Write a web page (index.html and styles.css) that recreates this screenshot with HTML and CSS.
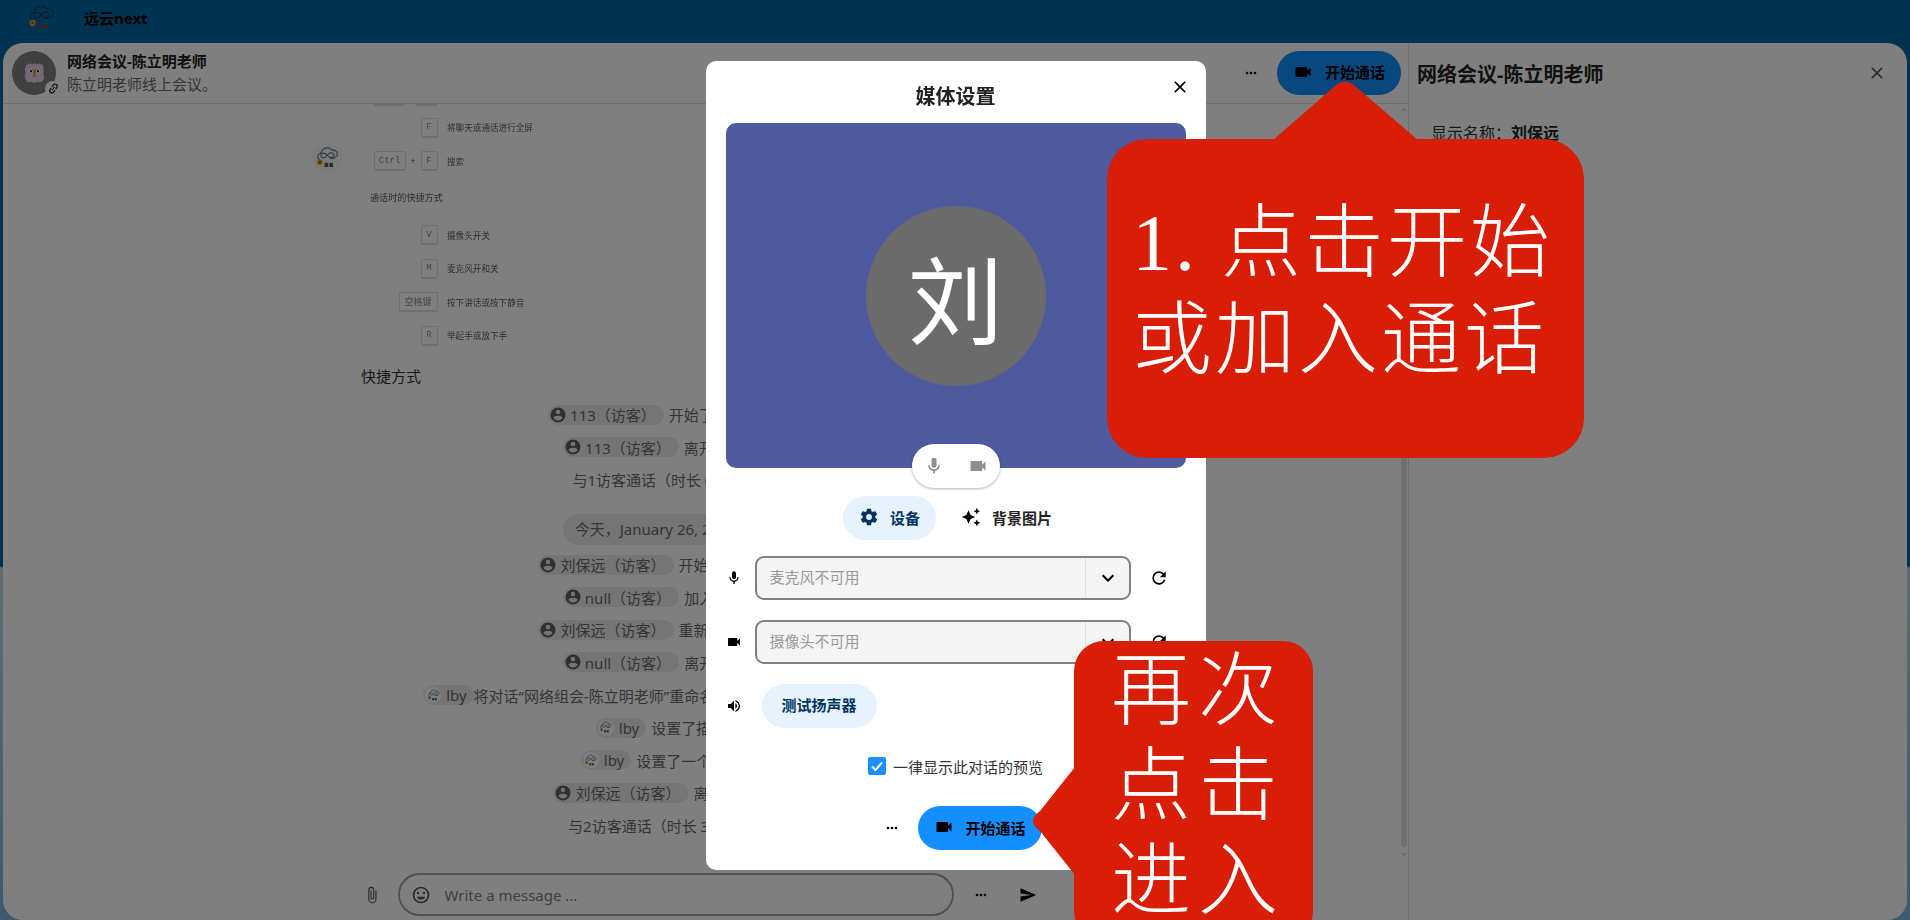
FILE: index.html
```html
<!DOCTYPE html>
<html lang="zh-CN">
<head>
    <meta charset="UTF-8">
    <meta name="viewport" content="width=device-width, initial-scale=1.0">
    <title>网络会议-陈立明老师 - 远云next</title>
    <link rel="stylesheet" href="styles.css">
</head>
<body>
    <!-- Icons -->
    <svg class="sprite" xmlns="http://www.w3.org/2000/svg">
        <symbol id="i-video" viewBox="0 0 24 24"><path d="M17,10.5V7A1,1 0 0,0 16,6H4A1,1 0 0,0 3,7V17A1,1 0 0,0 4,18H16A1,1 0 0,0 17,17V13.5L21,17.5V6.5L17,10.5Z"/></symbol>
        <symbol id="i-mic" viewBox="0 0 24 24"><path d="M12,2A3,3 0 0,1 15,5V11A3,3 0 0,1 12,14A3,3 0 0,1 9,11V5A3,3 0 0,1 12,2M19,11C19,14.53 16.39,17.44 13,17.93V21H11V17.93C7.61,17.44 5,14.53 5,11H7A5,5 0 0,0 12,16A5,5 0 0,0 17,11H19Z"/></symbol>
        <symbol id="i-cog" viewBox="0 0 24 24"><path d="M12,15.5A3.5,3.5 0 0,1 8.5,12A3.5,3.5 0 0,1 12,8.5A3.5,3.5 0 0,1 15.5,12A3.5,3.5 0 0,1 12,15.5M19.43,12.97C19.47,12.65 19.5,12.33 19.5,12C19.5,11.67 19.47,11.34 19.43,11L21.54,9.37C21.73,9.22 21.78,8.95 21.66,8.73L19.66,5.27C19.54,5.05 19.27,4.96 19.05,5.05L16.56,6.05C16.04,5.66 15.5,5.32 14.87,5.07L14.5,2.42C14.46,2.18 14.25,2 14,2H10C9.75,2 9.54,2.18 9.5,2.42L9.13,5.07C8.5,5.32 7.96,5.66 7.44,6.05L4.95,5.05C4.73,4.96 4.46,5.05 4.34,5.27L2.34,8.73C2.21,8.95 2.27,9.22 2.46,9.37L4.57,11C4.53,11.34 4.5,11.67 4.5,12C4.5,12.33 4.53,12.65 4.57,12.97L2.46,14.63C2.27,14.78 2.21,15.05 2.34,15.27L4.34,18.73C4.46,18.95 4.73,19.03 4.95,18.95L7.44,17.94C7.96,18.34 8.5,18.68 9.13,18.93L9.5,21.58C9.54,21.82 9.75,22 10,22H14C14.25,22 14.46,21.82 14.5,21.58L14.87,18.93C15.5,18.67 16.04,18.34 16.56,17.94L19.05,18.95C19.27,19.03 19.54,18.95 19.66,18.73L21.66,15.27C21.78,15.05 21.73,14.78 21.54,14.63L19.43,12.97Z"/></symbol>
        <symbol id="i-sparkle" viewBox="0 0 24 24"><path d="M19,1L17.74,3.75L15,5L17.74,6.26L19,9L20.25,6.26L23,5L20.25,3.75M9,4L6.5,9.5L1,12L6.5,14.5L9,20L11.5,14.5L17,12L11.5,9.5M19,15L17.74,17.74L15,19L17.74,20.25L19,23L20.25,20.25L23,19L20.25,17.74"/></symbol>
        <symbol id="i-refresh" viewBox="0 0 24 24"><path d="M17.65,6.35C16.2,4.9 14.21,4 12,4A8,8 0 0,0 4,12A8,8 0 0,0 12,20C15.73,20 18.84,17.45 19.73,14H17.65C16.83,16.33 14.61,18 12,18A6,6 0 0,1 6,12A6,6 0 0,1 12,6C13.66,6 15.14,6.69 16.22,7.78L13,11H20V4L17.65,6.35Z"/></symbol>
        <symbol id="i-chevron" viewBox="0 0 24 24"><path d="M7.41,8.58L12,13.17L16.59,8.58L18,10L12,16L6,10L7.41,8.58Z"/></symbol>
        <symbol id="i-volume" viewBox="0 0 24 24"><path d="M14,3.23V5.29C16.89,6.15 19,8.83 19,12C19,15.17 16.89,17.84 14,18.7V20.77C18,19.86 21,16.28 21,12C21,7.72 18,4.14 14,3.23M16.5,12C16.5,10.23 15.5,8.71 14,7.97V16C15.5,15.29 16.5,13.76 16.5,12M3,9V15H7L12,20V4L7,9H3Z"/></symbol>
        <symbol id="i-close" viewBox="0 0 24 24"><path d="M19,6.41L17.59,5L12,10.59L6.41,5L5,6.41L10.59,12L5,17.59L6.41,19L12,13.41L17.59,19L19,17.59L13.41,12L19,6.41Z"/></symbol>
        <symbol id="i-dots" viewBox="0 0 24 24"><path d="M16,12A2,2 0 0,1 18,10A2,2 0 0,1 20,12A2,2 0 0,1 18,14A2,2 0 0,1 16,12M10,12A2,2 0 0,1 12,10A2,2 0 0,1 14,12A2,2 0 0,1 12,14A2,2 0 0,1 10,12M4,12A2,2 0 0,1 6,10A2,2 0 0,1 8,12A2,2 0 0,1 6,14A2,2 0 0,1 4,12Z"/></symbol>
        <symbol id="i-send" viewBox="0 0 24 24"><path d="M2,21L23,12L2,3V10L17,12L2,14V21Z"/></symbol>
        <symbol id="i-clip" viewBox="0 0 24 24"><path d="M16.5,6V17.5A4,4 0 0,1 12.5,21.5A4,4 0 0,1 8.5,17.5V5A2.5,2.5 0 0,1 11,2.5A2.5,2.5 0 0,1 13.5,5V15.5A1,1 0 0,1 12.5,16.5A1,1 0 0,1 11.5,15.5V6H10V15.5A2.5,2.5 0 0,0 12.5,18A2.5,2.5 0 0,0 15,15.5V5A4,4 0 0,0 11,1A4,4 0 0,0 7,5V17.5A5.5,5.5 0 0,0 12.5,23A5.5,5.5 0 0,0 18,17.5V6H16.5Z"/></symbol>
        <symbol id="i-smile" viewBox="0 0 24 24"><path d="M12,2C6.47,2 2,6.47 2,12A10,10 0 0,0 12,22A10,10 0 0,0 22,12C22,6.47 17.5,2 12,2M12,20A8,8 0 0,1 4,12A8,8 0 0,1 12,4A8,8 0 0,1 20,12A8,8 0 0,1 12,20M15.5,11A1.5,1.5 0 0,0 17,9.5A1.5,1.5 0 0,0 15.5,8A1.5,1.5 0 0,0 14,9.5A1.5,1.5 0 0,0 15.5,11M8.5,11A1.5,1.5 0 0,0 10,9.5A1.5,1.5 0 0,0 8.5,8A1.5,1.5 0 0,0 7,9.5A1.5,1.5 0 0,0 8.5,11M12,17.5C14.33,17.5 16.31,16.04 17.11,14H6.89C7.69,16.04 9.67,17.5 12,17.5Z"/></symbol>
        <symbol id="i-user" viewBox="0 0 24 24"><path d="M12,19.2C9.5,19.2 7.29,17.92 6,16C6.03,14 10,12.9 12,12.9C14,12.9 17.97,14 18,16C16.71,17.92 14.5,19.2 12,19.2M12,5A3,3 0 0,1 15,8A3,3 0 0,1 12,11A3,3 0 0,1 9,8A3,3 0 0,1 12,5M12,2A10,10 0 0,0 2,12A10,10 0 0,0 12,22A10,10 0 0,0 22,12C22,6.47 17.5,2 12,2Z"/></symbol>
        <symbol id="i-link" viewBox="0 0 24 24"><path d="M3.9,12C3.9,10.29 5.29,8.9 7,8.9H11V7H7A5,5 0 0,0 2,12A5,5 0 0,0 7,17H11V15.1H7C5.29,15.1 3.9,13.71 3.9,12M8,13H16V11H8V13M17,7H13V8.9H17C18.71,8.9 20.1,10.29 20.1,12C20.1,13.71 18.71,15.1 17,15.1H13V17H17A5,5 0 0,0 22,12A5,5 0 0,0 17,7Z"/></symbol>
        <symbol id="i-logo" viewBox="0 0 40 40">
            <path d="M9 24C3 22 3 13 10 12C11 3 24 0 28 7C36 5 40 14 35 18C30 23 24 20 20 15C16 10 10 12 10 16C10 21 17 21 20 16C23 11 29 10 31 13C33 17 29 20 25 20" fill="none" stroke="#17384f" stroke-width="1.5"/>
            <circle cx="8" cy="27" r="4.5" fill="#d89c18"/>
            <circle cx="8" cy="27" r="1.6" fill="#6b5010"/>
            <rect x="16" y="28" width="6" height="7" fill="#555"/>
            <rect x="24" y="28" width="6" height="7" fill="#555"/>
        </symbol>
    </svg>

    <header class="topbar">
        <svg class="topbar-logo"><use href="#i-logo"/></svg>
        <span class="topbar-name">远云next</span>
    </header>

    <main class="app">
        <section class="chat">
            <div class="chat-header">
                <div class="room-avatar">
                    <svg class="owl" viewBox="0 0 24 24">
                        <path d="M4 2Q7 0 9 2Q12 0 15 2Q18 0 20 2Q23 4 22 7Q24 10 22 13Q24 17 22 20Q20 24 16 22Q12 24 8 22Q4 24 2 20Q0 16 2 12Q0 8 2 5Q2 3 4 2Z" fill="#e2d0e6"/>
                        <circle cx="8" cy="10" r="2.4" fill="#fff"/>
                        <circle cx="16" cy="10" r="2.4" fill="#fff"/>
                        <circle cx="8" cy="10" r="1.3" fill="#222"/>
                        <circle cx="16" cy="10" r="1.3" fill="#222"/>
                        <path d="M9.5 6.5L12 9L14.5 6.5L13 14L14.5 16H9.5L11 14Z" fill="#e88a3a"/>
                    </svg>
                    <span class="room-badge"><svg class="icon-link"><use href="#i-link"/></svg></span>
                </div>
                <div class="room-info">
                    <div class="room-title">网络会议-陈立明老师</div>
                    <div class="room-desc">陈立明老师线上会议。</div>
                </div>
                <div class="header-actions">
                    <button class="icon-btn"><svg class="icon-16"><use href="#i-dots"/></svg></button>
                    <button class="call-btn"><svg class="icon-20"><use href="#i-video"/></svg>开始通话</button>
                </div>
            </div>

            <div class="chat-body">
                <div class="msg-group">
                    <div class="msg-avatar"><svg class="msg-logo"><use href="#i-logo"/></svg></div>
                    <div class="msg-content">
                        <div class="key-stub"><span class="stub-wide"></span><span class="stub-small"></span></div>

                        <div class="shortcut first">
                            <div class="keys"><kbd>F</kbd></div>
                            <span>将聊天或通话进行全屏</span>
                        </div>
                        <div class="shortcut">
                            <div class="keys"><kbd class="wide">Ctrl</kbd><i>+</i><kbd>F</kbd></div>
                            <span>搜索</span>
                        </div>
                        <div class="shortcut-title">通话时的快捷方式</div>
                        <div class="shortcut">
                            <div class="keys"><kbd>V</kbd></div>
                            <span>摄像头开关</span>
                        </div>
                        <div class="shortcut">
                            <div class="keys"><kbd>M</kbd></div>
                            <span>麦克风开和关</span>
                        </div>
                        <div class="shortcut">
                            <div class="keys"><kbd class="space">空格键</kbd></div>
                            <span>按下讲话或按下静音</span>
                        </div>
                        <div class="shortcut">
                            <div class="keys"><kbd>R</kbd></div>
                            <span>举起手或放下手</span>
                        </div>
                        <div class="image-caption">快捷方式</div>

                        <div class="sys-msg"><span class="pill"><svg class="pill-icon"><use href="#i-user"/></svg>113（访客）</span>开始了一个通话</div>
                        <div class="sys-msg"><span class="pill"><svg class="pill-icon"><use href="#i-user"/></svg>113（访客）</span>离开了通话</div>
                        <div class="sys-msg">与1访客通话（时长 0:12）</div>
                        <div class="date-row"><span class="date-pill">今天，January 26, 2025</span></div>
                        <div class="sys-msg"><span class="pill"><svg class="pill-icon"><use href="#i-user"/></svg>刘保远（访客）</span>开始了一个通话</div>
                        <div class="sys-msg"><span class="pill"><svg class="pill-icon"><use href="#i-user"/></svg>null（访客）</span>加入了通话</div>
                        <div class="sys-msg"><span class="pill"><svg class="pill-icon"><use href="#i-user"/></svg>刘保远（访客）</span>重新加入了通话</div>
                        <div class="sys-msg"><span class="pill"><svg class="pill-icon"><use href="#i-user"/></svg>null（访客）</span>离开了通话</div>
                        <div class="sys-msg"><span class="pill pill-user tight"><span class="pill-avatar"><svg><use href="#i-logo"/></svg></span>lby</span>将对话“网络组会-陈立明老师”重命名为了“网络会议-陈立明老师”.</div>
                        <div class="sys-msg"><span class="pill pill-user"><span class="pill-avatar"><svg><use href="#i-logo"/></svg></span>lby</span>设置了描述</div>
                        <div class="sys-msg"><span class="pill pill-user"><span class="pill-avatar"><svg><use href="#i-logo"/></svg></span>lby</span>设置了一个密码</div>
                        <div class="sys-msg"><span class="pill"><svg class="pill-icon"><use href="#i-user"/></svg>刘保远（访客）</span>离开了通话</div>
                        <div class="sys-msg">与2访客通话（时长 32:15）</div>
                    </div>
                </div>

                <div class="scrollbar">
                    <span class="arrow-up"></span>
                    <span class="thumb"></span>
                    <span class="arrow-down"></span>
                </div>
            </div>

            <div class="composer">
                <button class="icon-btn"><svg class="icon-18 dim"><use href="#i-clip"/></svg></button>
                <div class="composer-input">
                    <svg class="icon-20 dim"><use href="#i-smile"/></svg>
                    <span>Write a message ...</span>
                </div>
                <button class="icon-btn"><svg class="icon-16"><use href="#i-dots"/></svg></button>
                <button class="icon-btn"><svg class="icon-18 send"><use href="#i-send"/></svg></button>
            </div>
        </section>

        <aside class="sidebar">
            <div class="sidebar-head">
                <h2>网络会议-陈立明老师</h2>
                <svg class="icon-20 dim"><use href="#i-close"/></svg>
            </div>
            <div class="sidebar-name">显示名称：<b>刘保远</b></div>
        </aside>
    </main>

    <!-- Media settings dialog -->
    <div class="overlay">
        <div class="modal">
            <div class="modal-head">
                <h2>媒体设置</h2>
                <svg class="modal-close"><use href="#i-close"/></svg>
            </div>

            <div class="preview">
                <div class="preview-avatar">刘</div>
                <div class="preview-controls">
                    <svg class="icon-20"><use href="#i-mic"/></svg>
                    <svg class="icon-20"><use href="#i-video"/></svg>
                </div>
            </div>

            <div class="tabs">
                <button class="tab active"><svg class="icon-20"><use href="#i-cog"/></svg>设备</button>
                <button class="tab"><svg class="icon-20"><use href="#i-sparkle"/></svg>背景图片</button>
            </div>

            <div class="device-row">
                <svg class="icon-16"><use href="#i-mic"/></svg>
                <div class="select">
                    <span class="select-value">麦克风不可用</span>
                    <span class="select-arrow"><svg class="icon-24"><use href="#i-chevron"/></svg></span>
                </div>
                <svg class="icon-20 refresh"><use href="#i-refresh"/></svg>
            </div>
            <div class="device-row">
                <svg class="icon-16"><use href="#i-video"/></svg>
                <div class="select">
                    <span class="select-value">摄像头不可用</span>
                    <span class="select-arrow"><svg class="icon-24"><use href="#i-chevron"/></svg></span>
                </div>
                <svg class="icon-20 refresh"><use href="#i-refresh"/></svg>
            </div>
            <div class="device-row">
                <svg class="icon-16"><use href="#i-volume"/></svg>
                <button class="test-btn">测试扬声器</button>
            </div>

            <div class="preview-check">
                <span class="checkbox">
                    <svg viewBox="0 0 18 18"><path d="M4 9.5L7.5 13L14 5.5" fill="none" stroke="#fff" stroke-width="2"/></svg>
                </span>
                一律显示此对话的预览
            </div>

            <div class="modal-actions">
                <button class="icon-btn"><svg class="icon-16"><use href="#i-dots"/></svg></button>
                <button class="call-btn"><svg class="icon-20"><use href="#i-video"/></svg>开始通话</button>
            </div>
        </div>
    </div>

    <!-- Callouts drawn over the screenshot -->
    <div class="callout callout-one">
        <svg class="tail-up" viewBox="0 0 145 62"><path d="M0 62L62 8Q72 -1 82 8L145 62Z"/></svg>
        <div class="callout-line">1. 点击开始</div>
        <div class="callout-line">或加入通话</div>
    </div>
    <div class="callout callout-two">
        <svg class="tail-left" viewBox="0 0 48 108"><path d="M48 0L13 44Q-1 54 13 64L48 108Z"/></svg>
        <div class="callout-line">再次</div>
        <div class="callout-line">点击</div>
        <div class="callout-line">进入</div>
    </div>
</body>
</html>
```

FILE: styles.css
```css
* {
    box-sizing: border-box;
}

html, body {
    height: 100%;
}

body {
    margin: 0;
    height: 920px;
    overflow: hidden;
    font-family: "Noto Sans", "Noto Sans CJK SC", sans-serif;
    font-size: 15px;
    color: #222;
    background: linear-gradient(180deg, #0067a3 0, #0067a3 566px, #c0d8e6 568px, #7bb4dc 920px);
}

button {
    font-family: inherit;
    border: none;
    background: none;
    padding: 0;
    cursor: pointer;
}

h2 {
    margin: 0;
}

.sprite {
    display: none;
}

.icon-16 { width: 16px; height: 16px; flex: none; }
.icon-18 { width: 18px; height: 18px; flex: none; }
.icon-20 { width: 20px; height: 20px; flex: none; }
.icon-24 { width: 24px; height: 24px; flex: none; }
.dim { fill: #555; }

/* Top bar */
.topbar {
    display: flex;
    align-items: flex-start;
    height: 43px;
    padding: 4px 0 0 27px;
}

.topbar-logo {
    width: 28px;
    height: 28px;
}

.topbar-name {
    margin-left: 29px;
    line-height: 28px;
    font-weight: bold;
    color: #000;
}

/* Main panel */
.app {
    display: flex;
    height: 877px;
    margin: 0 3px;
    background: #fff;
    border-radius: 20px;
    overflow: hidden;
}

.chat {
    display: flex;
    flex-direction: column;
    width: 1406px;
    border-right: 1px solid #dedede;
}

.chat-header {
    display: flex;
    align-items: center;
    height: 61px;
    flex: none;
    padding: 0 7px 1px 9px;
    border-bottom: 1px solid #dedede;
}

.room-avatar {
    position: relative;
    display: flex;
    align-items: center;
    justify-content: center;
    width: 44px;
    height: 44px;
    border-radius: 50%;
    background: #808080;
}

.owl {
    width: 21px;
    height: 24px;
}

.room-badge {
    position: absolute;
    right: -5px;
    bottom: -2px;
    display: flex;
    align-items: center;
    justify-content: center;
    width: 16px;
    height: 16px;
    border-radius: 50%;
    background: #fff;
}

.icon-link {
    width: 13px;
    height: 13px;
    transform: rotate(-55deg);
}

.room-info {
    margin-left: 11px;
    line-height: 23px;
}

.room-title {
    font-weight: bold;
}

.room-desc {
    color: #6b6b6b;
}

.header-actions {
    display: flex;
    align-items: center;
    gap: 4px;
    margin-left: auto;
}

.icon-btn {
    display: flex;
    align-items: center;
    justify-content: center;
    width: 44px;
    height: 44px;
    flex: none;
}

.call-btn {
    display: flex;
    align-items: center;
    gap: 12px;
    width: 124px;
    height: 44px;
    padding: 0 0 2px 16px;
    border-radius: 22px;
    background: #1390fe;
    color: #000;
    font-size: 15px;
    font-weight: bold;
}

/* Messages */
.chat-body {
    position: relative;
    flex: 1;
    overflow: hidden;
    padding-left: 309px;
}

.msg-group {
    display: flex;
    gap: 19px;
}

.msg-avatar {
    display: flex;
    align-items: center;
    justify-content: center;
    width: 30px;
    height: 30px;
    margin-top: 39px;
    border-radius: 50%;
    background: #f6f6f6;
    flex: none;
}

.msg-logo {
    width: 24px;
    height: 24px;
}

.msg-content {
    width: 600px;
}

.key-stub {
    display: flex;
    justify-content: flex-end;
    gap: 12px;
    width: 76px;
    height: 2px;
}

.stub-wide, .stub-small {
    background: #dedede;
}

.stub-wide { width: 31px; }
.stub-small { width: 21px; }

.shortcut {
    display: flex;
    align-items: center;
    gap: 9.5px;
    height: 33.4px;
    font-size: 8.6px;
    color: #5c5c5c;
    filter: blur(0.3px);
}

.shortcut.first {
    margin-top: 5.3px;
}

.keys {
    display: flex;
    align-items: center;
    justify-content: flex-end;
    gap: 5px;
    width: 76.5px;
    flex: none;
}

.keys i {
    font-style: normal;
}

kbd {
    display: flex;
    align-items: center;
    justify-content: center;
    width: 17px;
    height: 20px;
    border: 1px solid #dedede;
    border-bottom-width: 2px;
    border-radius: 2px;
    font-family: "Liberation Mono", "Noto Sans CJK SC", monospace;
    font-size: 9px;
    color: #8a8a8a;
    flex: none;
}

kbd.wide {
    width: 32px;
}

kbd.space {
    width: 39px;
}

.shortcut-title {
    height: 40.6px;
    padding-left: 9px;
    line-height: 40.6px;
    font-size: 9.1px;
    color: #5c5c5c;
    filter: blur(0.3px);
}

.image-caption {
    height: 46px;
    padding-top: 11px;
    line-height: 26px;
    color: #333;
}

.sys-msg {
    display: flex;
    align-items: center;
    justify-content: center;
    height: 32.6px;
    color: #6b6b6b;
    white-space: nowrap;
}

.pill {
    display: flex;
    align-items: center;
    height: 20px;
    margin-right: 5px;
    padding: 0 8px 0 1px;
    border-radius: 10px;
    background: #ebebeb;
}

.pill-icon {
    width: 18px;
    height: 18px;
    margin-right: 3px;
    fill: #606060;
}

.pill-user {
    padding: 0 7px 0 2px;
}

.pill.tight {
    margin-right: 0;
}

.pill-avatar {
    display: flex;
    align-items: center;
    justify-content: center;
    width: 16px;
    height: 16px;
    margin-right: 5px;
    border-radius: 50%;
    background: #fff;
}

.pill-avatar svg {
    width: 13px;
    height: 13px;
}

.date-row {
    display: flex;
    justify-content: center;
    margin: 17.7px 0 3.7px;
}

.date-pill {
    height: 31px;
    padding: 0 23px 0 12px;
    line-height: 30px;
    border-radius: 16px;
    background: #ebebeb;
    color: #6b6b6b;
}

.scrollbar {
    position: absolute;
    top: 0;
    right: 1px;
    bottom: 0;
    width: 6px;
}

.thumb {
    position: absolute;
    top: 60px;
    left: 0;
    width: 6px;
    height: 683px;
    border-radius: 3px;
    background: #dedede;
}

.arrow-up, .arrow-down {
    position: absolute;
    left: 0;
    border-left: 3px solid transparent;
    border-right: 3px solid transparent;
}

.arrow-up {
    top: 3px;
    border-bottom: 4px solid #dedede;
}

.arrow-down {
    top: 749px;
    border-top: 4px solid #dedede;
}

.composer {
    display: flex;
    align-items: flex-start;
    height: 51px;
    flex: none;
    padding: 4px 0 0 347px;
}

.composer .icon-btn {
    height: 43px;
}

.composer-input {
    display: flex;
    align-items: center;
    gap: 14px;
    width: 556px;
    height: 43px;
    margin: 0 5px 0 3.5px;
    padding-left: 11px;
    border: 2px solid #a0a0a0;
    border-radius: 22px;
    color: #808080;
}

.send {
    margin-left: 7px;
}

/* Sidebar */
.sidebar {
    width: 498px;
}

.sidebar-head {
    display: flex;
    align-items: center;
    justify-content: space-between;
    height: 60px;
    padding: 0 20px 0 8px;
}

.sidebar-head h2 {
    font-size: 20px;
}

.sidebar-name {
    margin: 18px 0 0 22px;
    font-size: 16px;
    line-height: 24px;
    color: #333;
}

.sidebar-name b {
    font-weight: bold;
    color: #222;
}

/* Dialog */
.overlay {
    position: fixed;
    top: 0;
    left: 0;
    width: 100%;
    height: 100%;
    z-index: 10;
    display: flex;
    justify-content: center;
    align-items: flex-start;
    background: rgba(0, 0, 0, 0.5);
}

.modal {
    width: 500px;
    height: 809px;
    margin: 61px 0 0 1px;
    padding: 0 20px;
    border-radius: 10px;
    background: #fff;
}

.modal-head {
    position: relative;
    height: 62px;
    padding-top: 21px;
    text-align: center;
}

.modal-head h2 {
    font-size: 20px;
    line-height: 30px;
}

.modal-close {
    position: absolute;
    top: 16px;
    right: -4px;
    width: 20px;
    height: 20px;
}

.preview {
    position: relative;
    display: flex;
    align-items: center;
    justify-content: center;
    height: 345px;
    border-radius: 10px;
    background: #4f599e;
}

.preview-avatar {
    display: flex;
    align-items: center;
    justify-content: center;
    width: 180px;
    height: 180px;
    border-radius: 50%;
    background: #6b6b6b;
    color: #fff;
    font-size: 95px;
}

.preview-controls {
    position: absolute;
    left: 186px;
    bottom: -20px;
    display: flex;
    align-items: center;
    justify-content: space-between;
    width: 88px;
    height: 44px;
    padding: 0 12px;
    border-radius: 22px;
    background: #fff;
    box-shadow: 0 1px 3px rgba(0, 0, 0, 0.3);
    fill: #8f8f8f;
}

.tabs {
    display: flex;
    justify-content: center;
    gap: 9px;
    margin-top: 28px;
}

.tab {
    display: flex;
    align-items: center;
    gap: 11px;
    height: 44px;
    padding: 0 16px 2px;
    border-radius: 22px;
    font-size: 15px;
    font-weight: 600;
    color: #222;
}

.tab.active {
    background: #e6f3fe;
    color: #00345e;
    fill: #00345e;
}

.device-row {
    display: flex;
    align-items: center;
    height: 44px;
    margin-top: 20px;
}

.tabs + .device-row {
    margin-top: 16px;
}

.device-row > .icon-16 {
    margin: 0 13px 0 0;
}

.select {
    display: flex;
    align-items: stretch;
    width: 376px;
    height: 44px;
    border: 2px solid #808080;
    border-radius: 9px;
    background: #f4f4f4;
}

.select-value {
    flex: 1;
    padding-left: 13px;
    line-height: 38px;
    color: #999;
}

.select-arrow {
    display: flex;
    align-items: center;
    justify-content: center;
    width: 44px;
    padding-left: 1px;
    border-left: 1px solid #e0e0e0;
}

.refresh {
    margin-left: 18px;
}

.test-btn {
    height: 44px;
    margin-left: 7px;
    padding: 0 20px 3px;
    border-radius: 22px;
    background: #e6f3fe;
    color: #00345e;
    font-size: 15px;
    font-weight: bold;
}

.preview-check {
    display: flex;
    align-items: center;
    justify-content: center;
    gap: 7px;
    height: 18px;
    margin-top: 29px;
    color: #333;
}

.checkbox {
    display: block;
    width: 18px;
    height: 18px;
    border-radius: 2px;
    background: #1a90ff;
}

.checkbox svg {
    display: block;
}

.modal-actions {
    display: flex;
    justify-content: center;
    gap: 4px;
    margin-top: 31px;
}

/* Red callouts */
.callout {
    position: absolute;
    z-index: 20;
    background: #d81e06;
    color: #fff;
    font-family: "Liberation Serif", "Noto Sans CJK SC", serif;
    font-size: 80px;
    font-weight: 300;
}

.callout svg {
    position: absolute;
    fill: #d81e06;
    overflow: visible;
}

.callout-one {
    left: 1107px;
    top: 139px;
    width: 477px;
    height: 319px;
    padding: 56px 0 0 25px;
    border-radius: 40px;
    line-height: 97px;
    letter-spacing: 3px;
    white-space: nowrap;
}

.tail-up {
    left: 166px;
    top: -61px;
    width: 145px;
    height: 62px;
}

.callout-two {
    left: 1074px;
    top: 641px;
    width: 239px;
    height: 300px;
    padding: 3px 0 0 9px;
    border-radius: 30px;
    line-height: 95px;
    letter-spacing: 7px;
    text-align: center;
}

.tail-left {
    left: -47px;
    top: 126px;
    width: 48px;
    height: 108px;
}
```
